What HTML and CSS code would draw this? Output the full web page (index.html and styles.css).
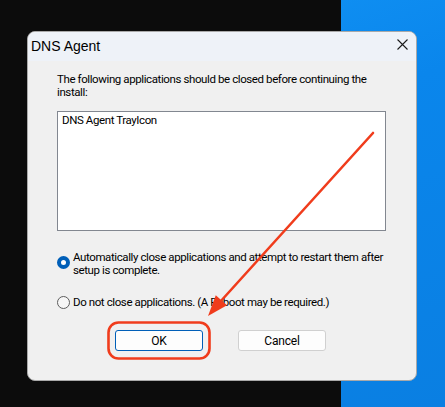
FILE: index.html
```html
<!DOCTYPE html>
<html>
<head>
<meta charset="utf-8">
<link rel="stylesheet" href="styles.css">
</head>
<body>
<div class="desktop">
  <div class="dialog">
    <div class="titlebar">
      <span class="title">DNS Agent</span>
      <svg class="close" width="11" height="11" viewBox="0 0 11 11"><path d="M0.5 0.5L10.5 10.5M10.5 0.5L0.5 10.5" stroke="#1b1b1b" stroke-width="1.1" fill="none"/></svg>
    </div>
    <div class="content">
      <p class="message">The following applications should be closed before continuing the install:</p>
      <div class="listbox"><div class="item">DNS Agent TrayIcon</div></div>
      <div class="radio radio-first">
        <span class="dot checked"></span>
        <span class="label">Automatically close applications and attempt to restart them after setup is complete.</span>
      </div>
      <div class="radio radio-second">
        <span class="dot"></span>
        <span class="label">Do not close applications. (A Reboot may be required.)</span>
      </div>
      <div class="buttons">
        <button class="btn btn-default">OK</button>
        <button class="btn">Cancel</button>
      </div>
    </div>
  </div>
  <svg class="annot" width="445" height="407" viewBox="0 0 445 407">
    <rect x="108.5" y="322.5" width="101" height="36" rx="10" ry="10" fill="none" stroke="#f03c1c" stroke-width="2.6"/>
    <line x1="373" y1="133" x2="220" y2="302" stroke="#f03c1c" stroke-width="2.6" stroke-linecap="round"/>
    <polygon points="208,316 215.8,295.2 227,305.3" fill="#f03c1c"/>
  </svg>
</div>
</body>
</html>
```
FILE: styles.css
```css
html, body {
  margin: 0;
  padding: 0;
}
body {
  width: 445px;
  height: 407px;
  overflow: hidden;
  font-family: "Liberation Sans", Arial, sans-serif;
}
.desktop {
  position: relative;
  width: 445px;
  height: 407px;
  box-sizing: border-box;
  padding: 31px 0 0 27px;
  background:
    linear-gradient(to right, #0c0c0c 0, #0c0c0c 341px, transparent 341px),
    linear-gradient(160deg, #1497f7 0%, #0a86ec 40%, #0a7fe2 100%);
}
.dialog {
  width: 390px;
  height: 350px;
  box-sizing: border-box;
  background: #f0f0f0;
  border: 1px solid #a9a9a9;
  border-radius: 8px;
  overflow: hidden;
  display: flex;
  flex-direction: column;
}
.titlebar {
  height: 29px;
  background: #eef2f8;
  display: flex;
  align-items: center;
  justify-content: space-between;
  padding: 0 8px 0 3px;
  flex: none;
}
.title {
  font-size: 14px;
  color: #000;
  margin-top: -1px;
}
.close {
  display: block;
  margin-top: -4px;
}
.content {
  padding: 12px 30px 0 29px;
  display: flex;
  flex-direction: column;
  font-family: Roboto, "Liberation Sans", Arial, sans-serif;
  font-size: 11.5px;
  letter-spacing: -0.4px;
  line-height: 13px;
  color: #000;
}
.message {
  margin: 0;
  padding-right: 10px;
}
.listbox {
  margin-top: 12px;
  height: 120px;
  box-sizing: border-box;
  background: #fff;
  border: 1px solid #828790;
  padding: 2px 4px;
}
.radio {
  display: flex;
  align-items: flex-start;
  gap: 3px;
}
.radio-first {
  margin-top: 20px;
}
.radio-second {
  margin-top: 19px;
}
.radio-first .dot {
  margin-top: 5px;
}
.dot {
  flex: none;
  width: 13px;
  height: 13px;
  box-sizing: border-box;
  border-radius: 50%;
  border: 1px solid #5d5d5d;
  background: #f6f6f6;
}
.dot.checked {
  border: 4px solid #005fb8;
  background: #fff;
}
.buttons {
  margin-top: 21px;
  display: flex;
  gap: 35px;
  padding-left: 58px;
}
.btn {
  width: 88px;
  height: 21px;
  box-sizing: border-box;
  background: #fdfdfd;
  border: 1px solid #d0d0d0;
  border-radius: 3px;
  font-family: Roboto, "Liberation Sans", Arial, sans-serif;
  font-size: 12px;
  letter-spacing: -0.2px;
  color: #000;
  padding: 0;
}
.btn-default {
  border: 1px solid #005fb8;
}
.annot {
  position: absolute;
  left: 0;
  top: 0;
  pointer-events: none;
}
```
